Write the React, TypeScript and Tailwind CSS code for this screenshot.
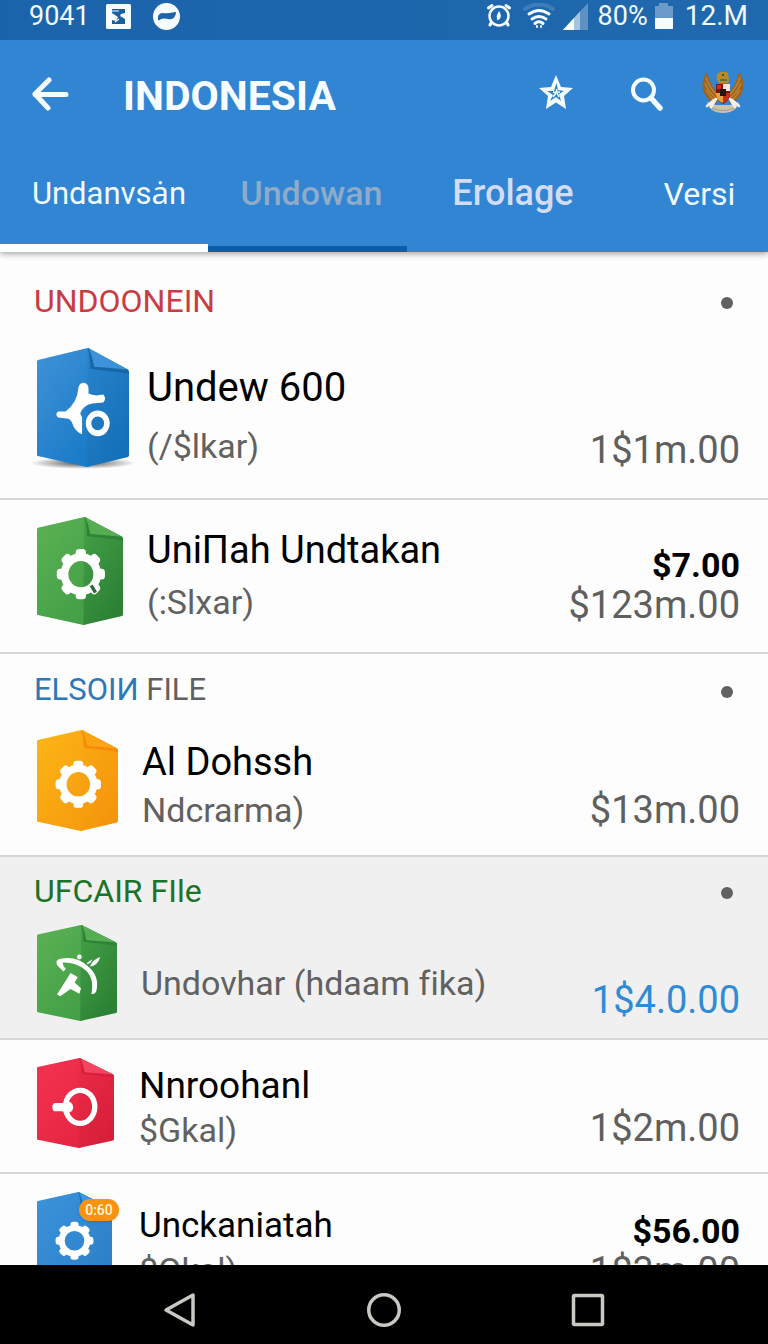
import { useState } from "react";
import type { ReactNode } from "react";
import clsx from "clsx";

type Tone = "blue" | "green" | "amber" | "red" | "sky";

interface FileItem {
  id: string;
  tone: Tone;
  glyph: ReactNode;
  title?: string;
  subtitle: string;
  total?: string;
  amount: string;
  badge?: string;
  highlight?: boolean;
  rowClass: string;
  iconClass: string;
  textClass: string;
  titleClass?: string;
  subtitleClass: string;
  amountClass: string;
}

interface FileGroup {
  id: string;
  heading?: ReactNode;
  headingClass?: string;
  groupClass?: string;
  items: FileItem[];
}

const TONES: Record<Tone, { left: string; leftEnd: string; right: string; rightEnd: string; fold: string; shade: string }> = {
  blue: { left: "#3f93d8", leftEnd: "#1d7cc8", right: "#2a84cd", rightEnd: "#1470b8", fold: "#3d93d9", shade: "#1666a8" },
  green: { left: "#5cb255", leftEnd: "#45a047", right: "#45a247", rightEnd: "#2c8135", fold: "#57ad52", shade: "#2d8337" },
  amber: { left: "#fdb515", leftEnd: "#f79f10", right: "#fbaa12", rightEnd: "#f4960c", fold: "#fda412", shade: "#f58c08" },
  red: { left: "#f43350", leftEnd: "#e62743", right: "#ec2b47", rightEnd: "#d81f3a", fold: "#f34560", shade: "#d81f3c" },
  sky: { left: "#3d93d9", leftEnd: "#2f86cf", right: "#388dd4", rightEnd: "#2b80c8", fold: "#3f96dc", shade: "#1f72b8" },
};

function Gear() {
  return (
    <g>
      <circle r="19" fill="none" stroke="#fff" strokeWidth="9" />
      {[0, 45, 90, 135, 180, 225, 270, 315].map((angle) => (
        <rect key={angle} x="-6" y="-28" width="12" height="10" rx="4" fill="#fff" transform={`rotate(${angle})`} />
      ))}
    </g>
  );
}

const ScooterGlyph = (
  <g>
    <path
      d="M45 40 Q46 35 51 35 Q56 36 56 41 L56 46 Q62 49 72 47 Q76 51 72 55 L60 56 Q50 58 47 66 L49 70 L49 87 Q41 84 38 75 Q36 71 32 71 L23 70 Q19 67 23 64 L31 64 Q44 55 45 40Z"
      fill="#fff"
    />
    <circle cx="66" cy="76" r="10" fill="none" stroke="#fff" strokeWidth="6" />
  </g>
);

const GearCutGlyph = (
  <g>
    <g transform="translate(51 63.5)">
      <Gear />
    </g>
    <path d="M63 76 L68 84" stroke="#2c6b35" strokeWidth="4" />
  </g>
);

const GearGlyph = (
  <g transform="translate(51 64.5)">
    <Gear />
  </g>
);

const SmallGearGlyph = (
  <g transform="translate(50 65) scale(.9)">
    <Gear />
  </g>
);

const RunnerGlyph = (
  <g>
    <path
      d="M33 58 L25 50 Q22 43 31 42 Q50 39 63 51 Q79 64 74 83 Q72 87 68 86 Q72 66 60 56 Q47 46 32 47 Q32 51 36 55Z"
      fill="#fff"
    />
    <circle cx="53" cy="40" r="3" fill="#fff" />
    <path d="M79 40 Q76 51 66 52 Q70 43 79 40Z" fill="#fff" />
    <path d="M69 43 Q68 48 62 49 Q64 45 69 43Z" fill="#fff" />
    <path d="M42 60 L51 65 L47 72 L55 79 L53 86 L42 80 L29 89 L25 87Z" fill="#fff" />
  </g>
);

const RingGlyph = (
  <g>
    <ellipse cx="56" cy="65" rx="19" ry="22" fill="none" stroke="#fff" strokeWidth="7" />
    <rect x="20" y="60" width="20" height="11" rx="4.500" fill="#fff" />
    <circle cx="39" cy="65.500" r="8" fill="#fff" />
  </g>
);

function PageIcon({ id, tone, glyph, className }: { id: string; tone: Tone; glyph: ReactNode; className: string }) {
  const t = TONES[tone];
  return (
    <svg viewBox="0 0 100 120" preserveAspectRatio="none" className={clsx("block overflow-visible", className)} aria-hidden="true">
      <defs>
        <linearGradient id={`${id}-l`} x1="0" y1="0" x2="0.6" y2="1">
          <stop offset="0" stopColor={t.left} />
          <stop offset="1" stopColor={t.leftEnd} />
        </linearGradient>
        <linearGradient id={`${id}-r`} x1="0" y1="0" x2="0.6" y2="1">
          <stop offset="0" stopColor={t.right} />
          <stop offset="1" stopColor={t.rightEnd} />
        </linearGradient>
        <radialGradient id={`${id}-s`}>
          <stop offset="0" stopColor="#000" stopOpacity=".7" />
          <stop offset="1" stopColor="#000" stopOpacity="0" />
        </radialGradient>
      </defs>
      {tone === "blue" && <ellipse cx="50" cy="116" rx="57" ry="6" fill={`url(#${id}-s)`} />}
      <path d="M1 12 L55 0 L58 1 L58 119 L54 120 L1 109 Q0 109 0 108 L0 13Z" fill={`url(#${id}-l)`} />
      <path d="M55 0 L99 22 Q100 23 100 24 L100 108 Q100 109 99 110 L54 120Z" fill={`url(#${id}-r)`} />
      <path d="M55 0 Q58 9 58 21 L100 26 L99 22Z" fill={t.shade} />
      <path d="M56 0 Q60 8 62 19 Q80 20 99 22Z" fill={t.fold} />
      {glyph}
    </svg>
  );
}

function GarudaEmblem() {
  return (
    <svg viewBox="0 0 42 42" className="size-[42px]" aria-hidden="true">
      <path d="M5 1 Q-1 9 1 19 Q4 29 14 33 L17 24 Q9 16 5 1Z" fill="#9c6420" />
      <path d="M37 1 Q43 9 41 19 Q38 29 28 33 L25 24 Q33 16 37 1Z" fill="#9c6420" />
      <path d="M4 6 Q7 17 15 24 M3 12 Q6 21 14 27 M4 19 Q8 26 13 30 M38 6 Q35 17 27 24 M39 12 Q36 21 28 27 M38 19 Q34 26 29 30" fill="none" stroke="#c18534" strokeWidth="1.3" />
      <path d="M5 31 Q8 42 21 42 Q34 42 37 31 L28 34 L14 34Z" fill="#c9c2ae" />
      <path d="M10 37 Q21 42 32 37" fill="none" stroke="#9a957e" strokeWidth="1.2" strokeDasharray="2 1" />
      <path d="M15 9 Q13 2 19 1 Q28 0 26 5 Q28 9 26 12 L17 12Z" fill="#b98a25" />
      <circle cx="21" cy="4" r="1" fill="#2d3a2a" />
      <path d="M18 9 H25" stroke="#43603a" strokeWidth="1.4" />
      <path d="M14 13 H28 V24 Q27 30 21 33 Q15 30 14 24Z" fill="#7d130f" />
      <path d="M21 13 H28 V20 H21Z" fill="#f2e6dc" />
      <path d="M14 22 H21 V32 Q15 30 14 24Z" fill="#e9a13c" />
      <path d="M21 22 H28 V24 Q27 30 21 32Z" fill="#c62d1d" />
      <path d="M18 18 H24 V25 H18Z" fill="#251512" />
      <path d="M15 14 H19 V18 H15Z" fill="#d2301f" />
      <path d="M14 28 L9 36 M12 29 L5 35 M28 28 L33 36 M30 29 L37 35" stroke="#f5f1e6" strokeWidth="2.6" strokeLinecap="round" />
    </svg>
  );
}

function StatusBar() {
  return (
    <div className="flex h-10 items-center bg-linear-to-r from-[#1b63ab] to-[#2069ae] pr-5 pb-2 pl-[29px] text-[27px] leading-8 text-[#f0fbff]">
      <span>9041</span>
      <svg viewBox="0 0 25 25" className="ml-4 size-[25px]" aria-hidden="true">
        <rect width="25" height="25" rx="1.5" fill="#f6fdff" />
        <path d="M6 5 H19 V9 L15 10 L14 12 L19 15 V20 H6 V16 L10 17 L12 13 L6 9Z" fill="#1c5f9f" />
        <path d="M6 7 H13 M9 18 L13 15" fill="none" stroke="#f6fdff" strokeWidth="1.2" />
      </svg>
      <svg viewBox="0 0 27 27" className="ml-[22px] size-[27px]" aria-hidden="true">
        <circle cx="13.500" cy="13.500" r="13.500" fill="#f6fdff" />
        <path d="M5 17 Q4 11 9 10 Q14 11 22 9 Q24 9 22 13 Q20 17 15 16 Q11 15 8 16 Q6 18 5 17Z" fill="#1c65ab" />
      </svg>

      <svg viewBox="0 0 24 26" className="ml-auto h-[26px] w-6" fill="none" stroke="#f6fdff" strokeLinecap="round" aria-hidden="true">
        <circle cx="12" cy="13" r="9.500" strokeWidth="2.500" />
        <path d="M1.500 5 L5 2.500 M22.500 5 L19 2.500 M3 22 L4 20 M21 22 L20 20" strokeWidth="3" />
        <path d="M12 10 Q10 13 11 16 Q14 14 12 10Z" strokeWidth="2" />
      </svg>
      <svg viewBox="0 0 32 26" className="ml-3 h-[26px] w-8" fill="none" stroke="#f6fdff" strokeLinecap="round" aria-hidden="true">
        <path d="M2 6 Q16 -3 30 6" stroke="#3d7db9" strokeWidth="4" />
        <path d="M6 11 Q16 4 26 11" strokeWidth="3" />
        <path d="M9 16 Q16 11 23 16" strokeWidth="3" />
        <path d="M12 20.500 Q16 17 20 20.500" strokeWidth="3" />
        <path d="M14 23 V24 M18 23 V24" strokeWidth="2" />
      </svg>
      <svg viewBox="0 0 25 27" className="ml-2 h-[27px] w-[25px]" aria-hidden="true">
        <path d="M0 27 L25 0 V27Z" fill="#5d92c2" />
        <path d="M0 27 L17 8.500 V27Z" fill="#a6c4df" />
        <path d="M0 27 L11 15 V27Z" fill="#f6fdff" />
      </svg>
      <span className="ml-[10px]">80%</span>
      <svg viewBox="0 0 18 26" className="ml-[7px] h-[26px] w-[18px]" aria-hidden="true">
        <path d="M0 3 H4 V0 H13 V3 H18 V26 H0Z" fill="#6b9bc9" />
        <path d="M0 15 H18 V26 H0Z" fill="#f6fdff" />
      </svg>
      <span className="ml-3 text-[28px]">12.M</span>
    </div>
  );
}

function AppBar() {
  return (
    <div className="flex h-[107px] items-center pr-6 pl-8">
      <button type="button" aria-label="Back">
        <svg viewBox="0 0 37 34" className="block h-[34px] w-[37px]" fill="none" stroke="#f6fdff" strokeWidth="5" strokeLinecap="round" strokeLinejoin="round">
          <path d="M17 3 L3 17 L16 31 M3 17.500 H34" />
        </svg>
      </button>
      <h1 className="mt-1 ml-[54px] text-[41px] leading-[48px] font-bold text-[#f6fdff]">INDONESIA</h1>
      <button type="button" aria-label="Favorites" className="mb-1 ml-auto">
        <svg viewBox="0 0 34 34" className="block size-[34px]">
          <path d="M17 0 L22 12 L34 13 L25 21 L27 34 L17 27.500 L7 34 L9 21 L0 13 L12 12Z" fill="#f6fdff" />
          <path d="M17.500 8 L19 15 L25 16 L20 19 L22 26 L17 22 L11 26 L14 20 L8 16 L15 16Z" fill="#2e82cc" />
          <path d="M18 14 L17 17 L21 17 M17 18 L14 22 M18 18 L20 22 M14 17 L17 18" stroke="#f6fdff" strokeWidth="1.500" fill="none" />
        </svg>
      </button>
      <button type="button" aria-label="Search" className="ml-[58px]">
        <svg viewBox="0 0 32 34" className="block h-[34px] w-8" fill="none" stroke="#f6fdff" strokeLinecap="round">
          <circle cx="12.500" cy="13" r="10.500" strokeWidth="4" />
          <path d="M20 21 L29 31" strokeWidth="5.500" />
        </svg>
      </button>
      <button type="button" aria-label="Country" className="mb-1 ml-[39px]">
        <GarudaEmblem />
      </button>
    </div>
  );
}

const TABS = [
  { id: "undanvsan", label: "Undanvsȧn", className: "border-b-8 border-[#fbffff] pb-1 pl-[10px] text-[31px] text-[#f0fbff]" },
  { id: "undowan", label: "Undowan", className: "border-b-6 border-[#0b5fa8] pb-2 pl-2 text-[34px] font-medium text-[#8fabc9]" },
  { id: "erolage", label: "Erolage", className: "border-b-6 border-transparent pb-2 text-[36px] font-medium text-[#d2dcf5]" },
  { id: "versi", label: "Versi", className: "border-b-6 border-transparent pb-1.5 pl-3 text-[32px] text-[#f0fbff]" },
];

const GROUPS: FileGroup[] = [
  {
    id: "undoonein",
    heading: "UNDOONEIN",
    headingClass: "h-[97px] text-[32px] text-[#c93c43] -mb-px",
    items: [
      {
        id: "undew",
        tone: "blue",
        glyph: ScooterGlyph,
        title: "Undew 600",
        subtitle: "(/$lkar)",
        amount: "1$1m.00",
        rowClass: "min-h-[152px] gap-[18px]",
        iconClass: "h-[119px] w-[92px]",
        textClass: "pt-4",
        titleClass: "text-[40px]",
        subtitleClass: "mt-[14px]",
        amountClass: "pt-[82px]",
      },
      {
        id: "unillah",
        tone: "green",
        glyph: GearCutGlyph,
        title: "UniПah Undtakan",
        subtitle: "(:Slxar)",
        total: "$7.00",
        amount: "$123m.00",
        rowClass: "min-h-[154px] gap-6",
        iconClass: "mt-[17px] h-[108px] w-[86px]",
        textClass: "pt-[26px]",
        titleClass: "text-[38px]",
        subtitleClass: "mt-2",
        amountClass: "pt-[45px]",
      },
    ],
  },
  {
    id: "elsoik",
    heading: (
      <>
        <span className="text-[#2c78b8]">ELSOIИ</span> FILE
      </>
    ),
    headingClass: "h-[76px] pb-1 text-[31px] text-[#616161]",
    items: [
      {
        id: "al-dohssh",
        tone: "amber",
        glyph: GearGlyph,
        title: "Al Dohssh",
        subtitle: "Ndcrarma)",
        amount: "$13m.00",
        rowClass: "min-h-[127px] gap-6",
        iconClass: "h-[101px] w-[81px]",
        textClass: "pt-2",
        titleClass: "text-[38px]",
        subtitleClass: "mt-1",
        amountClass: "pt-[60px]",
      },
    ],
  },
  {
    id: "ufcair",
    heading: "UFCAIR FIle",
    headingClass: "h-[68px] text-[32px] text-[#1c7228]",
    groupClass: "bg-[#f0f0f0]",
    items: [
      {
        id: "undovhar",
        tone: "green",
        glyph: RunnerGlyph,
        subtitle: "Undovhar (hdaam fika)",
        amount: "1$4.0.00",
        highlight: true,
        rowClass: "min-h-[115px] gap-6",
        iconClass: "h-24 w-20",
        textClass: "pt-[38px]",
        subtitleClass: "",
        amountClass: "pt-[55px]",
      },
    ],
  },
  {
    id: "recent",
    items: [
      {
        id: "nnroohanl",
        tone: "red",
        glyph: RingGlyph,
        title: "Nnroohanl",
        subtitle: "$Gkal)",
        amount: "1$2m.00",
        rowClass: "min-h-[134px] gap-[25px]",
        iconClass: "mt-[18px] h-[90px] w-[77px]",
        textClass: "pt-[22px]",
        titleClass: "text-[37px]",
        subtitleClass: "",
        amountClass: "pt-[68px]",
      },
      {
        id: "unckaniatah",
        tone: "sky",
        glyph: SmallGearGlyph,
        title: "Unckaniatah",
        subtitle: "$Okal)",
        total: "$56.00",
        amount: "1$3m.00",
        badge: "0:60",
        rowClass: "min-h-[134px] gap-[27px]",
        iconClass: "mt-[18px] h-[90px] w-[75px]",
        textClass: "pt-7",
        titleClass: "text-[35px]",
        subtitleClass: "",
        amountClass: "pt-[37px]",
      },
    ],
  },
];

function FileRow({ item }: { item: FileItem }) {
  return (
    <li className={clsx("flex items-start border-b-2 border-[#d6d6d6] pr-7 pl-[37px]", item.rowClass)}>
      <div className="relative shrink-0">
        <PageIcon id={item.id} tone={item.tone} glyph={item.glyph} className={item.iconClass} />
        {item.badge && (
          <span className="absolute top-[25px] left-[42px] flex h-[22px] w-10 items-center justify-center rounded-full bg-[#f7930f] text-[14px] font-medium text-[#fff3d6] shadow-sm">
            {item.badge}
          </span>
        )}
      </div>
      <div className={clsx("min-w-0 flex-1", item.textClass)}>
        {item.title && (
          <p className={clsx("leading-[48px] whitespace-nowrap text-black", item.titleClass)}>{item.title}</p>
        )}
        <p className={clsx("text-[34px] leading-10 whitespace-nowrap text-[#616161]", item.subtitleClass)}>
          {item.subtitle}
        </p>
      </div>
      <div className={clsx("shrink-0 text-right leading-10", item.amountClass)}>
        {item.total && <p className="text-[34px] font-bold text-black">{item.total}</p>}
        <p className={clsx("text-[38px]", item.highlight ? "text-[#2f8bd6]" : "text-[#5f5f5f]")}>{item.amount}</p>
      </div>
    </li>
  );
}

function NavigationBar() {
  return (
    <nav className="z-10 flex h-[79px] shrink-0 items-center justify-center gap-[170px] bg-black pt-[11px]">
      <button type="button" aria-label="Back">
        <svg viewBox="0 0 34 36" className="block h-9 w-[34px]" fill="none" stroke="#c9c8c3" strokeWidth="3.500" strokeLinejoin="round">
          <path d="M30 3 V33 L3 18Z" />
        </svg>
      </button>
      <button type="button" aria-label="Home">
        <svg viewBox="0 0 34 34" className="block size-[34px]" fill="none" stroke="#c9c8c3" strokeWidth="3.500">
          <circle cx="17" cy="17" r="15.250" />
        </svg>
      </button>
      <button type="button" aria-label="Recent apps">
        <svg viewBox="0 0 34 34" className="block size-[34px]" fill="none" stroke="#c9c8c3" strokeWidth="3.500" strokeLinejoin="round">
          <rect x="2.500" y="2.500" width="29" height="29" rx="1" />
        </svg>
      </button>
    </nav>
  );
}

export default function App() {
  const [activeTab, setActiveTab] = useState("undanvsan");

  return (
    <div className="flex h-screen flex-col overflow-hidden bg-[#fdfdfd] font-['Roboto','Noto_Sans',sans-serif] [font-variant-ligatures:none]">
      <header className="z-10 shrink-0 bg-[#3185d2] shadow-[0_2px_6px_rgba(0,0,0,0.35)]">
        <StatusBar />
        <AppBar />
        <div role="tablist" className="grid h-[105px] grid-cols-[208fr_199fr_212fr_149fr]">
          {TABS.map((tab) => (
            <button
              key={tab.id}
              type="button"
              role="tab"
              aria-selected={activeTab === tab.id}
              onClick={() => setActiveTab(tab.id)}
              className={clsx("self-end h-full leading-10", tab.className)}
            >
              {tab.label}
            </button>
          ))}
        </div>
      </header>

      <main className="min-h-0 flex-1 overflow-hidden">
        {GROUPS.map((group) => (
          <section key={group.id} className={group.groupClass}>
            {group.heading && (
              <div className={clsx("flex items-center justify-between pr-[35px] pl-[34px]", group.headingClass)}>
                <h2 className="leading-10">{group.heading}</h2>
                <button type="button" aria-label="More" className="mt-1 size-3 rounded-full bg-[#616161]" />
              </div>
            )}
            <ul>
              {group.items.map((item) => (
                <FileRow key={item.id} item={item} />
              ))}
            </ul>
          </section>
        ))}
      </main>

      <NavigationBar />
    </div>
  );
}
